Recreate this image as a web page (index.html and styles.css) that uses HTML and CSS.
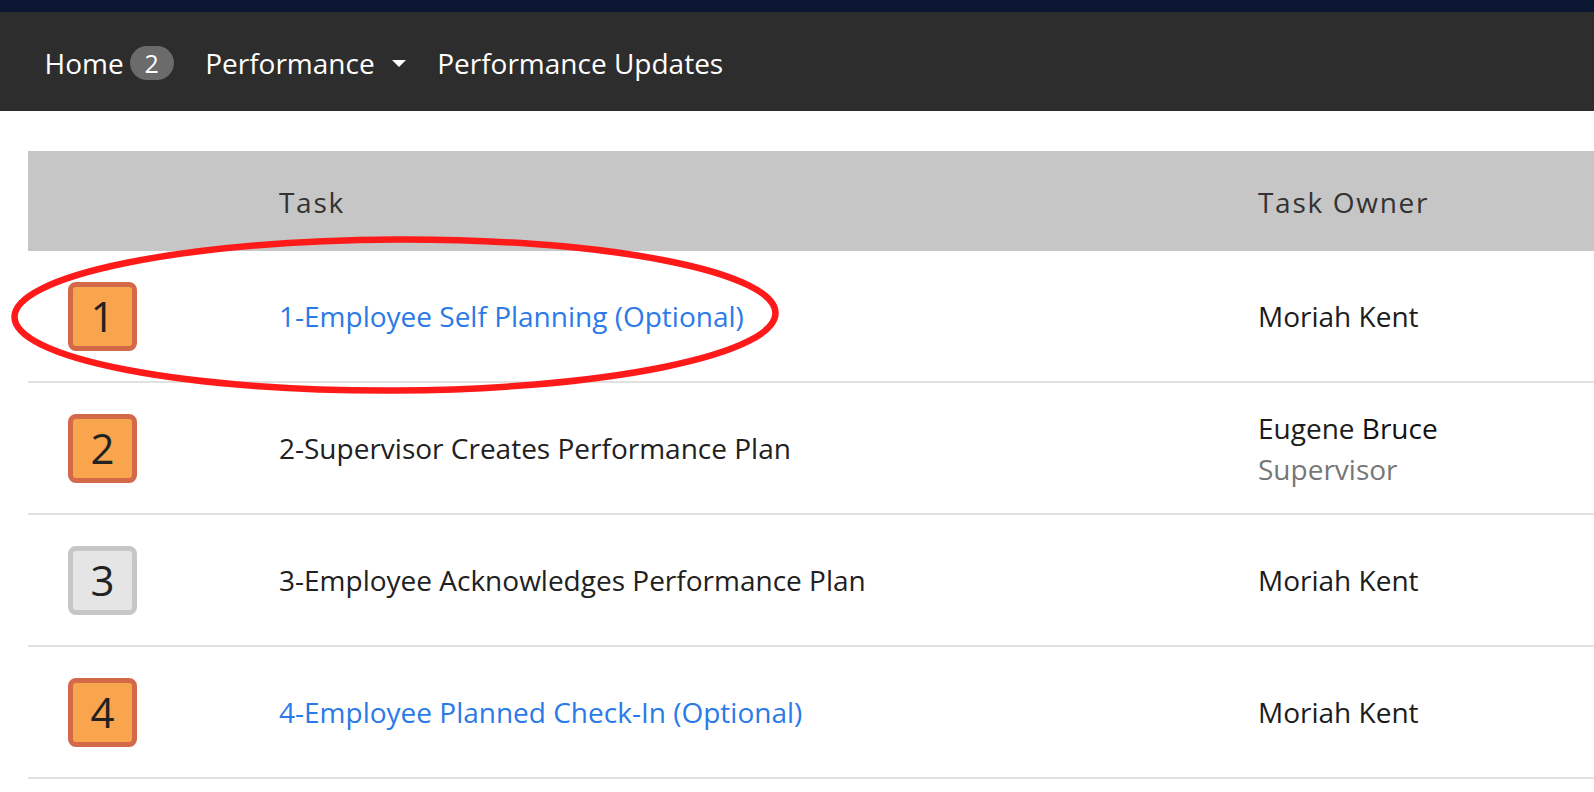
FILE: index.html
```html
<!DOCTYPE html>
<html>
<head>
<meta charset="utf-8">
<link rel="stylesheet" href="styles.css">
</head>
<body>
<div class="topstrip"></div>
<nav class="navbar">
  <a class="nav-item">Home <span class="pill">2</span></a>
  <a class="nav-item">Performance <span class="caret"></span></a>
  <a class="nav-item">Performance Updates</a>
</nav>
<main class="content">
  <div class="table">
    <div class="row head">
      <div class="cell"></div>
      <div class="cell th">Task</div>
      <div class="cell th">Task Owner</div>
    </div>
    <div class="row">
      <div class="cell"><span class="badge orange">1</span></div>
      <div class="cell"><a class="link">1-Employee Self Planning (Optional)</a></div>
      <div class="cell owner">Moriah Kent</div>
    </div>
    <div class="row">
      <div class="cell"><span class="badge orange">2</span></div>
      <div class="cell">2-Supervisor Creates Performance Plan</div>
      <div class="cell owner"><div>Eugene <span class="strong">Bruce</span></div><div class="role">Supervisor</div></div>
    </div>
    <div class="row">
      <div class="cell"><span class="badge gray">3</span></div>
      <div class="cell">3-Employee Acknowledges Performance Plan</div>
      <div class="cell owner">Moriah Kent</div>
    </div>
    <div class="row">
      <div class="cell"><span class="badge orange">4</span></div>
      <div class="cell"><a class="link">4-Employee Planned Check-In (Optional)</a></div>
      <div class="cell owner">Moriah Kent</div>
    </div>
  </div>
  <svg class="annotation" width="800" height="180" viewBox="0 0 800 180">
    <ellipse cx="395" cy="84" rx="380.5" ry="75.5" fill="none" stroke="#ff1a1a" stroke-width="6.5" transform="rotate(-0.3 395 84)"/>
  </svg>
</main>
</body>
</html>
```
FILE: styles.css
```css
html, body {
  margin: 0;
  padding: 0;
  background: #ffffff;
  overflow: hidden;
  font-family: "Open Sans", "Liberation Sans", sans-serif;
  color: #212121;
}

.topstrip {
  height: 12px;
  background: #0b1733;
}

.navbar {
  height: 99px;
  box-sizing: border-box;
  background: #2d2d2d;
  display: flex;
  align-items: center;
  padding-left: 44.5px;
  padding-top: 3px;
  gap: 31.5px;
}

.nav-item {
  color: #ffffff;
  font-size: 28px;
  display: flex;
  align-items: center;
  white-space: nowrap;
}

.pill {
  display: inline-flex;
  align-items: center;
  justify-content: center;
  background: #6b6b6b;
  color: #fff;
  border-radius: 17px;
  width: 44px;
  height: 34px;
  font-size: 25px;
  margin-left: 6px;
}

.caret {
  display: inline-block;
  width: 0;
  height: 0;
  border-left: 7px solid transparent;
  border-right: 7px solid transparent;
  border-top: 7px solid #ffffff;
  margin-left: 17px;
  margin-top: 1px;
}

.content {
  position: relative;
  padding-top: 40px;
  padding-left: 28px;
}

.table {
  display: flex;
  flex-direction: column;
}

.row {
  display: grid;
  grid-template-columns: 251px 979px 1fr;
  height: 132px;
  border-bottom: 2px solid #e1e1e1;
  box-sizing: border-box;
  align-items: center;
  font-size: 28px;
}

.row.head {
  height: 100px;
  background: #c6c6c6;
  border-bottom: none;
}

.th {
  font-size: 28px;
  letter-spacing: 1.7px;
  color: #333333;
  padding-top: 2px;
}

.cell {
  white-space: nowrap;
}

.link {
  color: #2a7ae8;
}

.owner {
  color: #1c1c1c;
}

.strong {
  color: #111;
}

.role {
  color: #777777;
  margin-top: 3px;
}

.badge {
  display: flex;
  align-items: center;
  justify-content: center;
  width: 69px;
  height: 69px;
  box-sizing: border-box;
  border: 5px solid;
  border-radius: 8px;
  margin-left: 40px;
  font-size: 42px;
  color: #222;
  line-height: 1;
}

.badge.orange {
  background: #f8a54e;
  border-color: #d4694a;
}

.badge.gray {
  background: #e5e5e5;
  border-color: #c6c6c6;
}

.annotation {
  position: absolute;
  left: 0;
  top: 120px;
  pointer-events: none;
}
```
